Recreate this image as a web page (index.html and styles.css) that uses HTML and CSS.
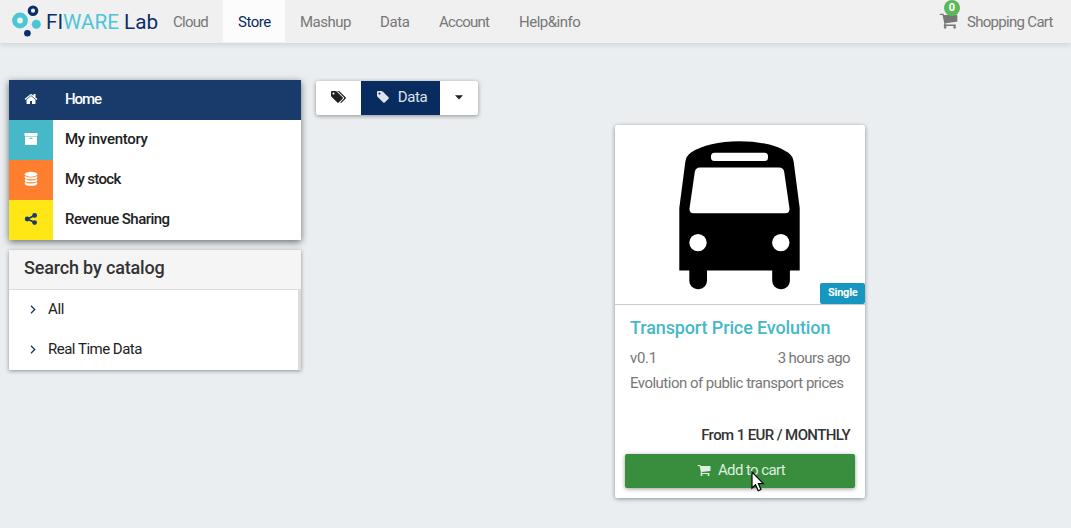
FILE: index.html
```html
<!DOCTYPE html>
<html lang="en">
<head>
<meta charset="utf-8">
<title>FIWARE Lab Store</title>
<link rel="stylesheet" href="styles.css">
</head>
<body>
<svg class="defs" width="0" height="0" aria-hidden="true">
  <symbol id="cart" viewBox="0 0 1792 1792"><path d="M704 1536q0 52-38 90t-90 38-90-38-38-90 38-90 90-38 90 38 38 90zm896 0q0 52-38 90t-90 38-90-38-38-90 38-90 90-38 90 38 38 90zm128-1088v512q0 24-16.500 42.500t-40.500 21.500l-1044 122q13 60 13 70 0 16-24 64h920q26 0 45 19t19 45-19 45-45 19h-1024q-26 0-45-19t-19-45q0-11 8-31.500t16-36 21.500-40 15.500-29.500l-177-823h-204q-26 0-45-19t-19-45 19-45 45-19h256q16 0 28.500 6.500t19.500 15.500 13 24.500 8 26 5.500 29.500 4.500 26h1201q26 0 45 19t19 45z"/></symbol>
</svg>
<header class="topbar">
  <svg class="logo" width="150" height="40" viewBox="10 0 150 40">
    <circle cx="20" cy="20.500" r="5.400" fill="none" stroke="#4cc5d7" stroke-width="5"/>
    <circle cx="33" cy="10.700" r="3.700" fill="none" stroke="#092e6b" stroke-width="3.200"/>
    <circle cx="36.300" cy="24.300" r="4.500" fill="#4cc5d7"/>
    <circle cx="27.400" cy="33.300" r="3.300" fill="#092e6b"/>
    <text class="logo-text" x="46" y="28.500" textLength="73" lengthAdjust="spacingAndGlyphs">FI<tspan class="logo-cyan">WARE</tspan></text>
    <text class="logo-text" x="124" y="28.500" textLength="34" lengthAdjust="spacingAndGlyphs">Lab</text>
  </svg>
  <nav class="nav">
    <a class="nav-cloud">Cloud</a><a class="nav-store active">Store</a><a class="nav-mashup">Mashup</a><a class="nav-data">Data</a><a class="nav-account">Account</a><a class="nav-help">Help&amp;info</a>
  </nav>
  <div class="cart">
    <span class="cart-icon"><svg width="19" height="19"><use href="#cart"/></svg><span class="badge">0</span></span>
    <span class="cart-label">Shopping Cart</span>
  </div>
</header>
<main class="page">
  <aside class="sidebar">
    <ul class="menu">
      <li class="home"><span class="tile"><svg width="14" height="14" viewBox="0 0 1792 1792"><path d="M1472 992v480q0 26-19 45t-45 19h-384v-384h-256v384h-384q-26 0-45-19t-19-45v-480q0-1 .5-3t.5-3l575-474 575 474q1 2 1 6zm223-69l-62 74q-8 9-21 11h-3q-13 0-21-7l-692-577-692 577q-12 8-24 7-13-2-21-11l-62-74q-8-10-7-23.500t11-21.500l719-599q32-26 76-26t76 26l244 204v-195q0-14 9-23t23-9h192q14 0 23 9t9 23v408l219 182q10 8 11 21.500t-7 23.500z"/></svg></span><span class="m-home">Home</span></li>
      <li class="inventory"><span class="tile"><svg width="14" height="14" viewBox="0 0 14 14"><path fill-rule="evenodd" d="M.5 1h13v3H.5zM1 4.500h12v8a.5.500 0 0 1-.5.500h-11a.5.500 0 0 1-.5-.5zM5.500 5.800v1h3v-1z"/></svg></span><span class="m-inventory">My inventory</span></li>
      <li class="stock"><span class="tile"><svg width="14" height="16" viewBox="0 0 14 16"><ellipse cx="7" cy="3.200" rx="6.200" ry="2.500"/><path d="M.8 5q6.200 3 12.400 0v1.400q0 1.900-6.200 1.900T.8 6.400zM.8 8q6.200 3 12.400 0v1.400q0 1.900-6.200 1.900T.8 9.400zM.8 11q6.200 3 12.400 0v1.500q0 2.300-6.200 2.300T.8 12.500z"/></svg></span><span class="m-stock">My stock</span></li>
      <li class="revenue"><span class="tile"><svg width="14" height="14" viewBox="0 0 14 14"><path d="M10.500 3.500 3.500 7l7 3.500" fill="none" stroke="currentColor" stroke-width="1.700"/><circle cx="10.600" cy="3.400" r="2.400"/><circle cx="3.200" cy="7" r="2.400"/><circle cx="10.600" cy="10.600" r="2.400"/></svg></span><span class="m-revenue">Revenue Sharing</span></li>
    </ul>
    <section class="catalog">
      <h2><span>Search by catalog</span></h2>
      <ul>
        <li><svg width="6" height="9" viewBox="0 0 6 9"><path d="M1 .8 4.700 4.500 1 8.200"/></svg><span class="c-all">All</span></li>
        <li><svg width="6" height="9" viewBox="0 0 6 9"><path d="M1 .8 4.700 4.500 1 8.200"/></svg><span class="c-real">Real Time Data</span></li>
      </ul>
    </section>
  </aside>
  <section class="content">
    <div class="tabs">
      <span class="tab tab-tags"><svg width="16" height="14" viewBox="0 0 2048 1792"><path d="M576 448q0-53-37.500-90.500t-90.500-37.500-90.500 37.500-37.500 90.500 37.500 90.500 90.500 37.500 90.500-37.500 37.500-90.500zm1067 576q0 53-37 90l-491 492q-39 37-91 37-53 0-90-37l-715-716q-38-37-64.500-101t-26.500-117v-416q0-52 38-90t90-38h416q53 0 117 26.500t102 64.500l715 714q37 39 37 91zm384 0q0 53-37 90l-491 492q-39 37-91 37-36 0-59-14t-53-45l470-470q37-37 37-90 0-52-37-91l-715-714q-38-38-102-64.500t-117-26.500h224q53 0 117 26.500t102 64.500l715 714q37 39 37 91z"/></svg></span>
      <span class="tab tab-data"><svg width="14" height="14" viewBox="0 0 1792 1792"><path d="M576 448q0-53-37.500-90.500t-90.500-37.500-90.500 37.500-37.500 90.500 37.500 90.500 90.500 37.500 90.500-37.500 37.500-90.500zm1067 576q0 53-37 90l-491 492q-39 37-91 37-53 0-90-37l-715-716q-38-37-64.500-101t-26.500-117v-416q0-52 38-90t90-38h416q53 0 117 26.500t102 64.500l715 714q37 39 37 91z"/></svg><span class="t-data">Data</span></span>
      <span class="tab tab-more"><svg width="8" height="5" viewBox="0 0 8 5"><path d="M0 .3h8L4 4.500z"/></svg></span>
    </div>
    <article class="card">
      <div class="picture">
        <svg width="250" height="179" viewBox="615 125 250 179">
          <path d="M679.300 208 685.300 162Q686 156 691 152.500 708 141.500 739.500 141.300 771 141.500 788 152.500 793 156 793.700 162L799.700 208V270.500H679.300Z"/>
          <rect x="689.300" y="255" width="17.700" height="34.300" rx="8.500"/>
          <rect x="772.200" y="255" width="17.700" height="34.300" rx="8.500"/>
          <g fill="#fff">
            <rect x="711" y="152.700" width="57" height="8.300" rx="3.500"/>
            <path d="M700 167.400H779Q783.500 167.400 784.200 172L789.500 208.500Q789.800 213.300 785.500 213.300H693.500Q689.200 213.300 689.500 208.500L694.800 172Q695.500 167.400 700 167.400Z"/>
            <circle cx="698" cy="242.600" r="8.700"/><circle cx="780.800" cy="242.600" r="8.700"/>
          </g>
        </svg>
        <span class="tag"><span>Single</span></span>
      </div>
      <div class="details">
        <h3><span>Transport Price Evolution</span></h3>
        <div class="meta"><span class="d-version">v0.1</span><span class="d-time">3 hours ago</span></div>
        <p><span class="d-desc">Evolution of public transport prices</span></p>
      </div>
      <div class="price"><span>From 1 EUR / MONTHLY</span></div>
      <button class="add"><svg width="14" height="14"><use href="#cart"/></svg><span>Add to cart</span></button>
      <svg class="pointer" width="14" height="22" viewBox="0 0 14 22"><path d="M1 1V17L4.500 13.700 7.200 19.800 10 18.500 7.400 12.700H12.400Z" fill="#fff" stroke="#000" stroke-width="1.200"/></svg>
    </article>
  </section>
</main>
</body>
</html>
```
FILE: styles.css
```css
* { box-sizing: border-box; }
body {
  margin: 0;
  height: 528px;
  overflow: hidden;
  background: #eaeef1;
  color: #212121;
  font: 15px/20px Roboto, "Open Sans", sans-serif;
}
ul, h2, h3, p { margin: 0; padding: 0; list-style: none; }
svg { display: block; fill: currentColor; flex: none; }
span { white-space: nowrap; }
.defs { position: absolute; }

.topbar {
  display: flex;
  height: 43px;
  padding-left: 10px;
  background: #f0f0f0;
  box-shadow: 0 1px 6px rgba(0, 0, 0, .15);
  color: #777;
}
.logo-text { font-size: 20px; fill: #092e6b; }
.logo-cyan { fill: #4cc5d7; }
.nav { display: flex; margin-left: -2px; height: 42px; }
.nav a { padding: 12px 0 0 15px; white-space: nowrap; }
.nav .active { background: #fcfcfc; color: #092c60; }
.nav-cloud { width: 65px; letter-spacing: -.75px; }
.nav-store { width: 62px; letter-spacing: -.45px; }
.nav-mashup { width: 80px; letter-spacing: -.5px; }
.nav-data { width: 59px; letter-spacing: -.4px; }
.nav-account { width: 80px; letter-spacing: -.75px; }
.nav-help { width: 91px; letter-spacing: -.5px; }
.cart { display: flex; margin-left: auto; padding: 12px 18px 0 0; }
.cart-icon { position: relative; width: 28px; }
.cart-icon svg { margin-top: -1px; }
.cart-label { width: 86px; letter-spacing: -.7px; }
.badge {
  position: absolute;
  left: 5px;
  top: -12px;
  width: 16px;
  height: 16px;
  border-radius: 50%;
  background: #5cb85c;
  color: #fff;
  font: bold 11px/16px Roboto, sans-serif;
  text-align: center;
}

.page { display: flex; gap: 15px; padding: 37px 0 0 9px; }
.sidebar { width: 292px; }
.menu { background: #fff; box-shadow: 0 2px 7px rgba(0, 0, 0, .55); font-weight: 500; }
.menu li { display: flex; height: 40px; line-height: 38px; }
.tile { display: grid; place-items: center; width: 44px; margin-right: 12px; padding: 0 1px 2px 0; color: #fff; }
.home { background: #193b6c; color: #fff; }
.inventory .tile { background: #46b8c8; }
.stock .tile { background: #ff7f2f; }
.revenue .tile { background: #ffe716; color: #193b6c; }

.catalog { margin-top: 10px; background: #fff; box-shadow: 0 1px 4px rgba(0, 0, 0, .4); }
.catalog h2 {
  height: 40px;
  padding-left: 15px;
  border-bottom: 1px solid #ddd;
  background: #f5f5f5;
  color: #333;
  font-size: 18px;
  font-weight: 500;
  line-height: 35px;
}
.catalog ul { border-right: 3px solid #ddd; }
.catalog li { display: flex; align-items: center; gap: 12px; height: 40px; padding-left: 21px; line-height: 38px; }
.catalog li span { margin-top: -2px; }
.catalog li svg { margin-top: -2px; }
.catalog path { fill: none; stroke: #193b6c; stroke-width: 1.3; }

.content { flex: 1; padding-top: 1px; }
.tabs { display: flex; width: 162px; height: 34px; background: #fff; border-radius: 2px; box-shadow: 0 1px 4px rgba(0, 0, 0, .4); }
.tab { display: flex; align-items: center; justify-content: center; }
.tab-tags { width: 45px; padding: 0 1px 2px 0; }
.tab-data { width: 79px; gap: 8px; padding: 0 0 2px 2px; background: #092c60; color: #dde3ea; }
.tab-more { width: 38px; padding-bottom: 1px; }

.card {
  position: relative;
  width: 250px;
  height: 373px;
  margin: 10px 0 0 299px;
  border-radius: 2px;
  background: #fff;
  box-shadow: 0 1px 4px rgba(0, 0, 0, .4);
}
.picture { position: relative; height: 180px; border-bottom: 1px solid #ccc; color: #000; }
.tag {
  position: absolute;
  right: 0;
  bottom: 0;
  width: 45px;
  height: 21px;
  padding-left: 8px;
  border-radius: 2px;
  background: #1797c0;
  color: #fff;
  font-size: 11px;
  font-weight: 700;
  letter-spacing: -.25px;
  line-height: 19px;
}
.details { height: 119px; padding: 12px 15px 0; color: #777; }
.details h3 { height: 31px; color: #46b8c8; font-size: 18px; font-weight: 500; line-height: 22px; }
.meta { display: flex; justify-content: space-between; height: 25px; }
.price { height: 30px; padding: 1px 15px 0 0; color: #333; font-weight: 500; text-align: right; }
.add {
  display: flex;
  align-items: center;
  justify-content: center;
  gap: 7px;
  width: 230px;
  height: 34px;
  margin-left: 10px;
  padding: 0 0 2px 2px;
  border: 0;
  border-radius: 2px;
  background: #388e3c;
  box-shadow: 0 1px 4px rgba(0, 0, 0, .4);
  color: #dfeee0;
  font: inherit;
}
.pointer { position: absolute; left: 136px; top: 346px; }

.m-home { letter-spacing: -1.1px; }
.m-inventory { letter-spacing: -.3px; }
.m-stock { letter-spacing: -.65px; }
.m-revenue { letter-spacing: -.55px; }
.catalog h2 span { letter-spacing: -.17px; }
.c-all { letter-spacing: -.4px; }
.c-real { letter-spacing: -.5px; }
.t-data { letter-spacing: -.4px; }
.details h3 span { letter-spacing: -.12px; }
.d-version { letter-spacing: -.3px; }
.d-time { letter-spacing: -.6px; }
.d-desc { letter-spacing: -.52px; }
.price span { letter-spacing: -.6px; }
.add span { letter-spacing: -.6px; }
```
